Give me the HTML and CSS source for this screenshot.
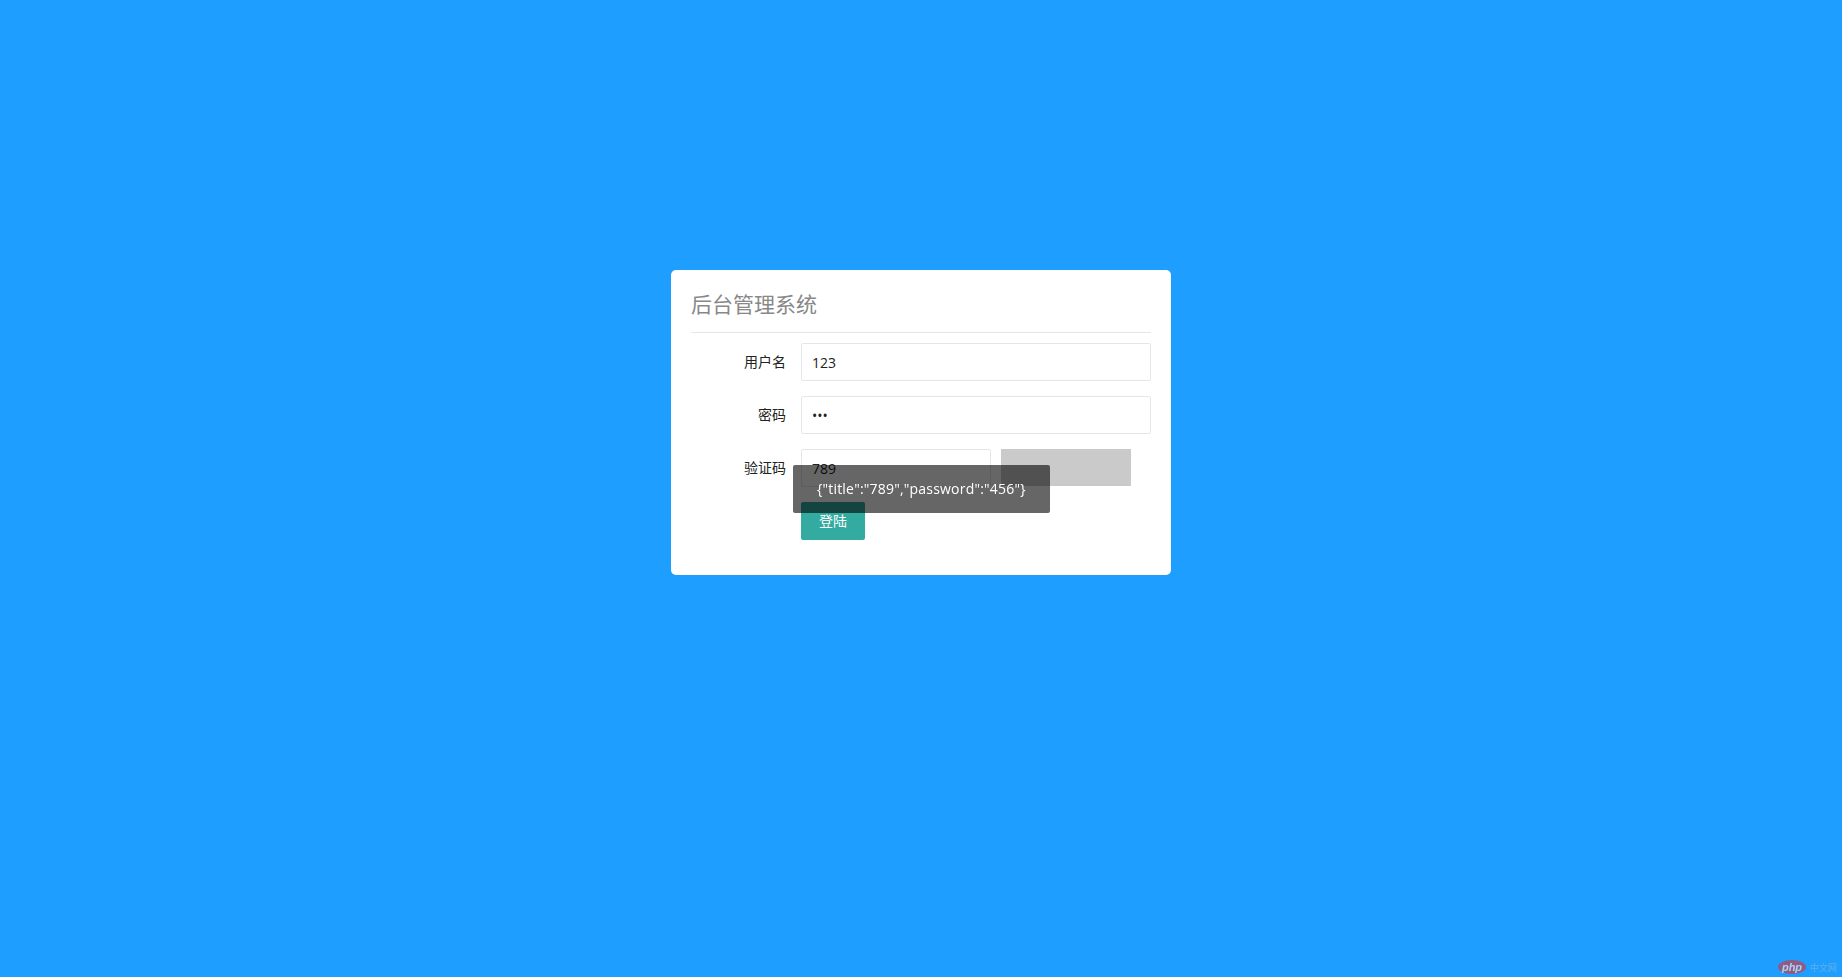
FILE: index.html
```html
<!DOCTYPE html>
<html lang="zh-CN">
<head>
    <meta charset="UTF-8">
    <title>后台管理系统</title>
    <link rel="stylesheet" href="styles.css">
</head>
<body>
    <div class="login">
        <h1 class="login-title">后台管理系统</h1>
        <form class="login-form">
            <div class="form-item">
                <label class="form-label">用户名</label>
                <input class="form-input" type="text" value="123">
            </div>
            <div class="form-item">
                <label class="form-label">密码</label>
                <input class="form-input" type="password" value="456">
            </div>
            <div class="form-item">
                <label class="form-label">验证码</label>
                <input class="form-input form-input-code" type="text" value="789">
                <div class="captcha"></div>
            </div>
            <div class="form-item">
                <span class="form-label"></span>
                <button class="btn" type="button">登陆</button>
            </div>
        </form>
    </div>

    <div class="toast">{"title":"789","password":"456"}</div>

    <div class="watermark">
        <svg class="php-logo" width="28" height="14" viewBox="0 0 28 14">
            <ellipse cx="14" cy="7" rx="14" ry="7" fill="#c0404f"/>
            <text x="14" y="10.5" text-anchor="middle" class="php-text">php</text>
        </svg>
        <span class="watermark-text">中文网</span>
    </div>
</body>
</html>
```

FILE: styles.css
```css
* {
    box-sizing: border-box;
}

body {
    margin: 0;
    min-height: 977px;
    background-color: #1e9fff;
    font-family: "Open Sans", "Noto Sans CJK SC", sans-serif;
    font-size: 14px;
    color: #333;
    padding-top: 270px;
    overflow: hidden;
}

.login {
    width: 500px;
    height: 305px;
    margin: 0 auto;
    padding: 20px;
    background-color: #fff;
    border-radius: 5px;
}

.login-title {
    margin: 0 0 10px;
    padding-bottom: 16px;
    border-bottom: 1px solid #e6e6e6;
    font-family: "Noto Sans CJK SC", sans-serif;
    font-size: 21px;
    font-weight: 400;
    line-height: 26px;
    color: #888;
}

.form-item {
    display: flex;
    margin-bottom: 15px;
}

.form-label {
    width: 110px;
    padding: 0 15px;
    font-family: "Noto Sans CJK SC", sans-serif;
    line-height: 36px;
    text-align: right;
    color: #222;
}

.form-input {
    flex: 1;
    height: 38px;
    padding: 0 0 0 10px;
    border: 1px solid #e6e6e6;
    border-radius: 2px;
    font-family: inherit;
    font-size: 14px;
    color: #222;
    outline: none;
}

.form-input-code {
    flex: 0 0 190px;
}

.captcha {
    width: 130px;
    height: 37px;
    margin-left: 10px;
    background-color: #cacaca;
}

.btn {
    width: 64px;
    height: 38px;
    padding: 0 0 2px;
    border: none;
    border-radius: 2px;
    background-color: #33aba0;
    font-family: "Noto Sans CJK SC", sans-serif;
    font-size: 14px;
    color: #fff;
}

.toast {
    position: fixed;
    left: 793px;
    top: 465px;
    width: 257px;
    height: 48px;
    padding: 12px 24px;
    border-radius: 2px;
    background-color: rgba(0, 0, 0, 0.6);
    line-height: 24px;
    letter-spacing: 0.2px;
    color: #fff;
    white-space: nowrap;
}

.watermark {
    position: fixed;
    right: 5px;
    bottom: 3px;
    display: flex;
    align-items: center;
    gap: 4px;
    opacity: 0.7;
}

.php-logo {
    display: block;
}

.php-text {
    font-family: "Liberation Sans", sans-serif;
    font-size: 11px;
    font-style: italic;
    font-weight: 700;
    fill: #e6e6f0;
}

.watermark-text {
    font-family: "Noto Sans CJK SC", sans-serif;
    font-size: 9px;
    color: #7fb4dd;
}
```
